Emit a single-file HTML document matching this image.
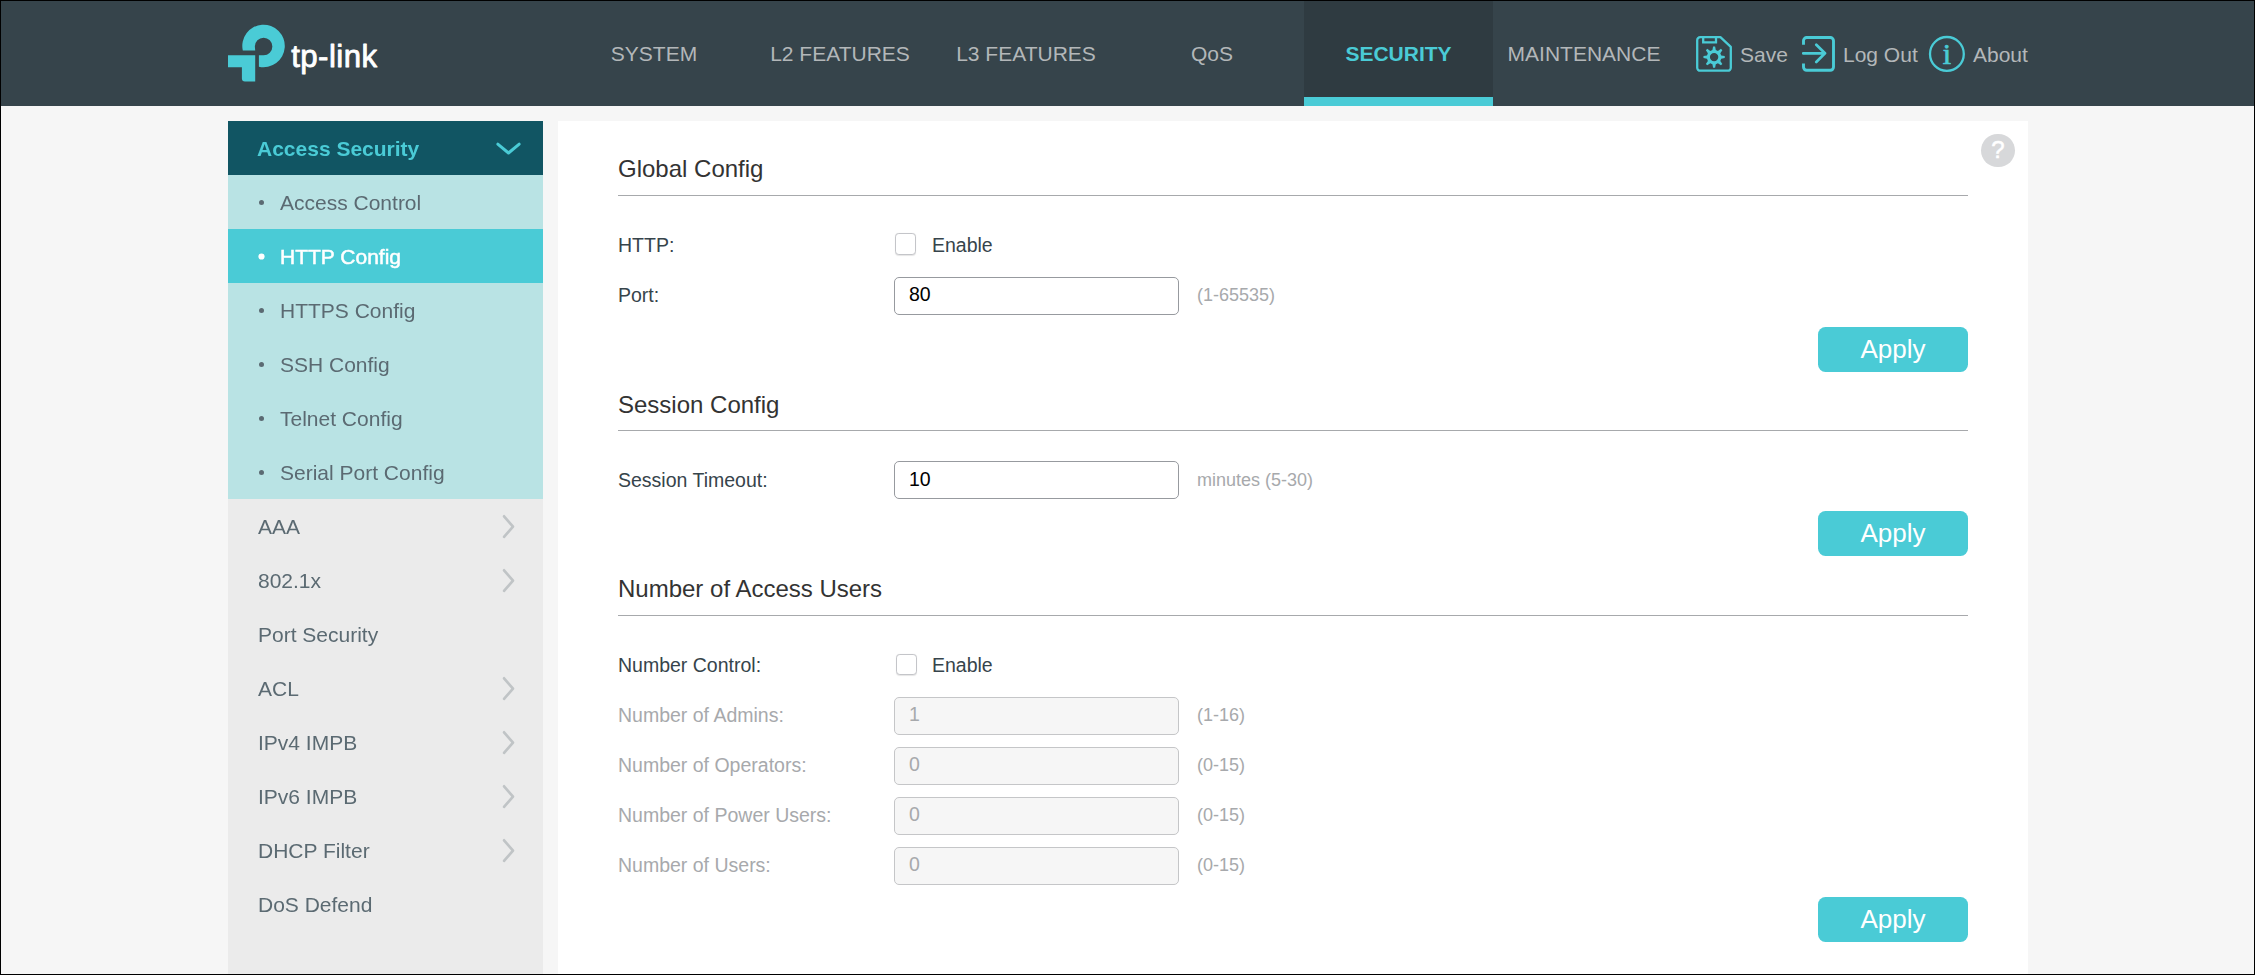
<!DOCTYPE html>
<html lang="en">
<head>
<meta charset="utf-8">
<title>HTTP Config</title>
<style>
*{box-sizing:border-box;margin:0;padding:0}
html,body{width:2255px;height:975px;overflow:hidden;background:#f6f6f6}
body{font-family:"Liberation Sans",Arial,sans-serif;color:#36444b;position:relative}
#frame{position:absolute;left:0;top:0;width:2255px;height:975px;border:1px solid #000;z-index:50;pointer-events:none}
#top{position:absolute;left:0;top:0;width:2255px;height:106px;background:#36444b}
.nav{position:absolute;top:0;height:106px;width:186px;text-align:center;font-size:21px;line-height:107px;color:#b3b7b9;white-space:nowrap}
.nav.act{background:#2f3b41;color:#4acbd6;font-weight:bold;border-bottom:9px solid #4acbd6;width:189px}
.tool{position:absolute;top:0;height:106px;line-height:109px;font-size:21px;color:#b3b7b9;white-space:nowrap}
.ico{position:absolute}
#side{position:absolute;left:228px;top:121px;width:315px;height:854px;background:#ebebeb;will-change:transform}
.m1{position:relative;height:54px;line-height:56px;font-size:21px;color:#5b6a72;padding-left:30px;white-space:nowrap}
.m1.open{background:#115563;color:#4acbd6;font-weight:bold;padding-left:29px}
.m2{position:relative;height:54px;line-height:56px;font-size:21px;color:#5b6a72;background:#b9e3e4;padding-left:52px;white-space:nowrap}
.m2:before{content:"";position:absolute;left:31px;top:25px;width:5px;height:5px;border-radius:50%;background:#5b6a72}
.m2.sel{background:#4acbd6;color:#fff;-webkit-text-stroke:0.5px #fff}
.m2.sel:before{background:#fff;box-shadow:0 0 0 .6px #fff}
.arr{position:absolute;left:0;top:0;width:315px;height:54px}
#main{position:absolute;left:558px;top:121px;width:1470px;height:854px;background:#fff}
.h{position:absolute;left:60px;font-size:24px;line-height:30px;color:#333;white-space:nowrap}
.hr{position:absolute;left:60px;width:1350px;height:1px;background:#a7a9ac}
.lb{position:absolute;left:60px;font-size:19.5px;line-height:30px;color:#36444b;white-space:nowrap;margin-top:-.5px}
.lb.dis{color:#a7a9ac}
.cb{position:absolute;left:337.3px;width:21.2px;height:21.2px;border:1.8px solid #c4c5c9;border-radius:3.8px;background:#fff;box-shadow:0 .5px 1px rgba(0,0,0,.10);margin-top:-1.7px}
.en{position:absolute;left:374px;font-size:19.5px;line-height:30px;color:#36444b;white-space:nowrap}
.in{position:absolute;left:336px;width:285px;height:38px;border:1px solid #979a9f;border-radius:5px;background:#fff;font-size:19.5px;line-height:34.6px;padding-left:14px;color:#000}
.in.dis{background:#f6f6f6;border-color:#c5c6c8;color:#a7a9ac;line-height:33.8px}
.hint{position:absolute;left:639px;font-size:18px;line-height:30px;color:#a7a9ac;white-space:nowrap}
.btn{position:absolute;left:1260px;width:150px;height:45px;border-radius:7.5px;background:#4acbd6;color:#fff;font-size:26px;line-height:45px;text-align:center}
#help{position:absolute;left:1423.4px;top:13.3px;width:33.2px;height:33.2px;border-radius:50%;background:#d7d8da;color:#fff;font-size:24px;line-height:32px;text-align:center;-webkit-text-stroke:.5px #fff}
</style>
</head>
<body>
<div id="top">
  <svg class="ico" id="logo" style="left:228px;top:24px" width="160" height="60" viewBox="0 0 160 60">
    <path fill="#4acbd6" d="M14.8,26.6 A21.25,21.25 0 1 1 30.9,42.73 L30.9,31.2 L35.6,31.2 A8.75,8.75 0 1 0 26.85,22.45 L27.2,26.6 Z"/>
    <path fill="#4acbd6" d="M0,31.2 H27.2 V57.6 H16.9 A3,3 0 0 1 13.9,54.6 V43.2 H0 Z"/>
    <text x="63.2" y="43.3" font-family="Liberation Sans, Arial, sans-serif" font-size="31.2" fill="#fff" stroke="#fff" stroke-width="0.8" stroke-linejoin="round" letter-spacing="0.45">tp-link</text>
  </svg>

  <div class="nav" style="left:561px">SYSTEM</div>
  <div class="nav" style="left:747px">L2 FEATURES</div>
  <div class="nav" style="left:933px">L3 FEATURES</div>
  <div class="nav" style="left:1119px">QoS</div>
  <div class="nav act" style="left:1304px">SECURITY</div>
  <div class="nav" style="left:1491px">MAINTENANCE</div>

  <svg class="ico" style="left:1696px;top:36px" width="36" height="36" viewBox="0 0 36 36"><path d="M4.2 1.2H24.4L34.8 10.8V31.7A3 3 0 0 1 31.8 34.7H4.2A3 3 0 0 1 1.2 31.7V4.2A3 3 0 0 1 4.2 1.2Z" fill="none" stroke="#4acbd6" stroke-width="2.3" stroke-linejoin="round"/><path d="M7.2 1.5V6.4H20V1.5" fill="none" stroke="#4acbd6" stroke-width="2.3"/><path d="M16.40 14.00L17.09 10.45L19.11 10.45L19.80 14.00L21.91 14.88L24.92 12.86L26.34 14.28L24.32 17.29L25.20 19.40L28.75 20.09L28.75 22.11L25.20 22.80L24.32 24.91L26.34 27.92L24.92 29.34L21.91 27.32L19.80 28.20L19.11 31.75L17.09 31.75L16.40 28.20L14.29 27.32L11.28 29.34L9.86 27.92L11.88 24.91L11.00 22.80L7.45 22.11L7.45 20.09L11.00 19.40L11.88 17.29L9.86 14.28L11.28 12.86L14.29 14.88Z M22.3 21.1A4.2 4.2 0 1 0 13.9 21.1A4.2 4.2 0 1 0 22.3 21.1Z" fill="#4acbd6" fill-rule="evenodd"/></svg>
  <svg class="ico" style="left:1802px;top:36px" width="34" height="36" viewBox="0 0 34 36"><path d="M1.5 8.8V4.7A3.2 3.2 0 0 1 4.7 1.5H28.3A3.2 3.2 0 0 1 31.5 4.700V31.1A3.2 3.2 0 0 1 28.3 34.3H4.7A3.2 3.2 0 0 1 1.5 31.1V27.6" fill="none" stroke="#4acbd6" stroke-width="2.9"/><path d="M1.2 17.3H22.6M14.3 8.7L23 17.3L14.3 26" fill="none" stroke="#4acbd6" stroke-width="2.7" stroke-linecap="round" stroke-linejoin="round"/></svg>
  <svg class="ico" style="left:1928px;top:35px" width="38" height="38" viewBox="0 0 38 38"><circle cx="18.9" cy="18.9" r="16.9" fill="none" stroke="#4acbd6" stroke-width="2.3"/><text x="18.9" y="28.6" text-anchor="middle" font-family="Liberation Serif, serif" font-size="30" fill="#4acbd6" stroke="#4acbd6" stroke-width="0.7">i</text></svg>
  <div class="tool" style="left:1740px">Save</div>
  <div class="tool" style="left:1843px">Log Out</div>
  <div class="tool" style="left:1973px">About</div>
</div>

<div id="side">
  <div class="m1 open">Access Security<svg class="arr" viewBox="0 0 315 54"><path d="M269.8 23.1L280.5 32L291.2 23.1" fill="none" stroke="#4acbd6" stroke-width="3" stroke-linecap="round" stroke-linejoin="round"/></svg></div>
  <div class="m2">Access Control</div>
  <div class="m2 sel">HTTP Config</div>
  <div class="m2">HTTPS Config</div>
  <div class="m2">SSH Config</div>
  <div class="m2">Telnet Config</div>
  <div class="m2">Serial Port Config</div>
  <div class="m1">AAA<svg class="arr" viewBox="0 0 315 54"><path d="M276.05 17.3L285 27.7L276.05 37.8" fill="none" stroke="#c0c4c6" stroke-width="2.7" stroke-linecap="round" stroke-linejoin="round"/></svg></div>
  <div class="m1">802.1x<svg class="arr" viewBox="0 0 315 54"><path d="M276.05 17.3L285 27.7L276.05 37.8" fill="none" stroke="#c0c4c6" stroke-width="2.7" stroke-linecap="round" stroke-linejoin="round"/></svg></div>
  <div class="m1">Port Security</div>
  <div class="m1">ACL<svg class="arr" viewBox="0 0 315 54"><path d="M276.05 17.3L285 27.7L276.05 37.8" fill="none" stroke="#c0c4c6" stroke-width="2.7" stroke-linecap="round" stroke-linejoin="round"/></svg></div>
  <div class="m1">IPv4 IMPB<svg class="arr" viewBox="0 0 315 54"><path d="M276.05 17.3L285 27.7L276.05 37.8" fill="none" stroke="#c0c4c6" stroke-width="2.7" stroke-linecap="round" stroke-linejoin="round"/></svg></div>
  <div class="m1">IPv6 IMPB<svg class="arr" viewBox="0 0 315 54"><path d="M276.05 17.3L285 27.7L276.05 37.8" fill="none" stroke="#c0c4c6" stroke-width="2.7" stroke-linecap="round" stroke-linejoin="round"/></svg></div>
  <div class="m1">DHCP Filter<svg class="arr" viewBox="0 0 315 54"><path d="M276.05 17.3L285 27.7L276.05 37.8" fill="none" stroke="#c0c4c6" stroke-width="2.7" stroke-linecap="round" stroke-linejoin="round"/></svg></div>
  <div class="m1">DoS Defend</div>
</div>

<div id="main">
  <div id="help">?</div>

  <div class="h" style="top:33px">Global Config</div>
  <div class="hr" style="top:74px"></div>
  <div class="lb" style="top:109px">HTTP:</div>
  <div class="cb" style="top:114px"></div>
  <div class="en" style="top:109px">Enable</div>
  <div class="lb" style="top:159px">Port:</div>
  <div class="in" style="top:156px;line-height:33.6px">80</div>
  <div class="hint" style="top:159px">(1-65535)</div>
  <div class="btn" style="top:206px">Apply</div>

  <div class="h" style="top:269px">Session Config</div>
  <div class="hr" style="top:309px"></div>
  <div class="lb" style="top:344px">Session Timeout:</div>
  <div class="in" style="top:340px">10</div>
  <div class="hint" style="top:344px">minutes (5-30)</div>
  <div class="btn" style="top:390px">Apply</div>

  <div class="h" style="top:453px">Number of Access Users</div>
  <div class="hr" style="top:494px"></div>
  <div class="lb" style="top:529px">Number Control:</div>
  <div class="cb" style="top:534.5px;left:337.7px"></div>
  <div class="en" style="top:529px">Enable</div>
  <div class="lb dis" style="top:579px">Number of Admins:</div>
  <div class="in dis" style="top:576px">1</div>
  <div class="hint" style="top:579px">(1-16)</div>
  <div class="lb dis" style="top:629px">Number of Operators:</div>
  <div class="in dis" style="top:626px">0</div>
  <div class="hint" style="top:629px">(0-15)</div>
  <div class="lb dis" style="top:679px">Number of Power Users:</div>
  <div class="in dis" style="top:676px">0</div>
  <div class="hint" style="top:679px">(0-15)</div>
  <div class="lb dis" style="top:729px">Number of Users:</div>
  <div class="in dis" style="top:726px">0</div>
  <div class="hint" style="top:729px">(0-15)</div>
  <div class="btn" style="top:776px">Apply</div>
</div>
<div id="frame"></div>
</body>
</html>
